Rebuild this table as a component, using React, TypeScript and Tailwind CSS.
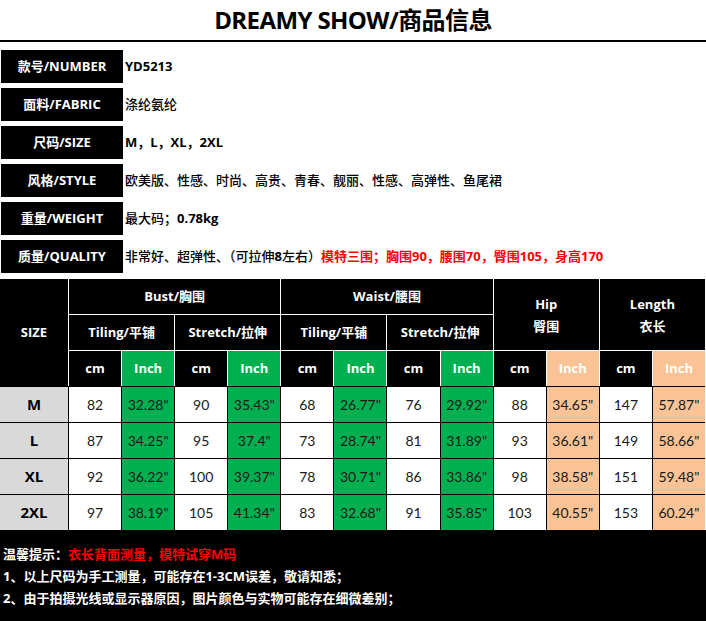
const info = [
  { label: "款号/NUMBER", value: <span className="font-bold">YD5213</span> },
  { label: "面料/FABRIC", value: <span>涤纶氨纶</span> },
  { label: "尺码/SIZE", value: <span className="font-bold">M，L，XL，2XL</span> },
  { label: "风格/STYLE", value: <span>欧美版、性感、时尚、高贵、青春、靓丽、性感、高弹性、鱼尾裙</span> },
  {
    label: "重量/WEIGHT",
    value: (
      <span>
        最大码；<span className="font-bold">0.78kg</span>
      </span>
    ),
  },
  {
    label: "质量/QUALITY",
    value: (
      <span>
        非常好、超弹性、（可拉伸<span className="font-bold">8</span>左右）
        <span className="font-bold text-[#ff0000]">模特三围；胸围90，腰围70，臀围105，身高170</span>
      </span>
    ),
  },
]

const rows = [
  { size: "M", v: ["82", "32.28\"", "90", "35.43\"", "68", "26.77\"", "76", "29.92\"", "88", "34.65\"", "147", "57.87\""] },
  { size: "L", v: ["87", "34.25\"", "95", "37.4\"", "73", "28.74\"", "81", "31.89\"", "93", "36.61\"", "149", "58.66\""] },
  { size: "XL", v: ["92", "36.22\"", "100", "39.37\"", "78", "30.71\"", "86", "33.86\"", "98", "38.58\"", "151", "59.48\""] },
  { size: "2XL", v: ["97", "38.19\"", "105", "41.34\"", "83", "32.68\"", "91", "35.85\"", "103", "40.55\"", "153", "60.24\""] },
]

const cellBg = (i: number) => {
  if (i % 2 === 0) return "bg-white"
  return i < 8 ? "bg-[#00b050]" : "bg-[#f9c396]"
}

const App = () => {
  return (
    <div className="w-[706px] h-[621px] overflow-hidden bg-white text-black font-['Open_Sans','Noto_Sans_CJK_SC',sans-serif]">
      <div className="h-[40px] flex items-center justify-center text-[24px] font-bold tracking-tight">
        DREAMY SHOW/商品信息
      </div>
      <div className="h-[2px] bg-black" />

      <div className="pt-[8px] flex flex-col gap-[5px]">
        {info.map((r) => (
          <div key={r.label} className="h-[33px] flex items-center">
            <div className="ml-px w-[122px] h-full bg-black text-white text-[13px] font-bold flex items-center justify-center">
              {r.label}
            </div>
            <div className="pl-[2px] text-[13px] font-medium">{r.value}</div>
          </div>
        ))}
      </div>

      <div className="mt-[6px] w-[705px]">
        <div className="grid grid-cols-[68px_repeat(12,minmax(0,1fr))] grid-rows-[35px_35px_35px] gap-px bg-white text-white text-[13px] font-bold">
          <div className="row-span-3 bg-black flex items-center justify-center">SIZE</div>
          <div className="col-span-4 bg-black flex items-center justify-center">Bust/胸围</div>
          <div className="col-span-4 bg-black flex items-center justify-center">Waist/腰围</div>
          <div className="col-span-2 row-span-2 bg-black flex flex-col items-center justify-center leading-[22px]">
            <span>Hip</span>
            <span>臀围</span>
          </div>
          <div className="col-span-2 row-span-2 bg-black flex flex-col items-center justify-center leading-[22px]">
            <span>Length</span>
            <span>衣长</span>
          </div>
          <div className="col-span-2 bg-black flex items-center justify-center">Tiling/平铺</div>
          <div className="col-span-2 bg-black flex items-center justify-center">Stretch/拉伸</div>
          <div className="col-span-2 bg-black flex items-center justify-center">Tiling/平铺</div>
          <div className="col-span-2 bg-black flex items-center justify-center">Stretch/拉伸</div>
          {Array.from({ length: 12 }).map((_, i) => (
            <div
              key={i}
              className={`flex items-center justify-center ${
                i % 2 === 0 ? "bg-black" : i < 8 ? "bg-[#00b050]" : "bg-[#f9c396]"
              }`}
            >
              {i % 2 === 0 ? "cm" : "Inch"}
            </div>
          ))}
        </div>

        <div className="grid grid-cols-[68px_repeat(12,minmax(0,1fr))] auto-rows-[35px] gap-px pt-px bg-black">
          {rows.map((r) => (
            <>
              <div key={r.size} className="bg-[#d9d9d9] flex items-center justify-center text-[15px] font-bold">
                {r.size}
              </div>
              {r.v.map((v, i) => (
                <div
                  key={r.size + i}
                  className={`${cellBg(i)} flex items-center justify-center text-[14px] text-[#1a1a1a] font-['Lato','Noto_Sans_CJK_SC',sans-serif]`}
                >
                  {v}
                </div>
              ))}
            </>
          ))}
        </div>
      </div>

      <div className="h-[91px] bg-black text-white text-[13px] font-bold pt-[13px] pl-[3px] leading-[22px]">
        <div>
          温馨提示：<span className="text-[#ff0000]">衣长背面测量，模特试穿M码</span>
        </div>
        <div>1、以上尺码为手工测量，可能存在1-3CM误差，敬请知悉；</div>
        <div>2、由于拍摄光线或显示器原因，图片颜色与实物可能存在细微差别；</div>
      </div>
    </div>
  )
}

export default App
